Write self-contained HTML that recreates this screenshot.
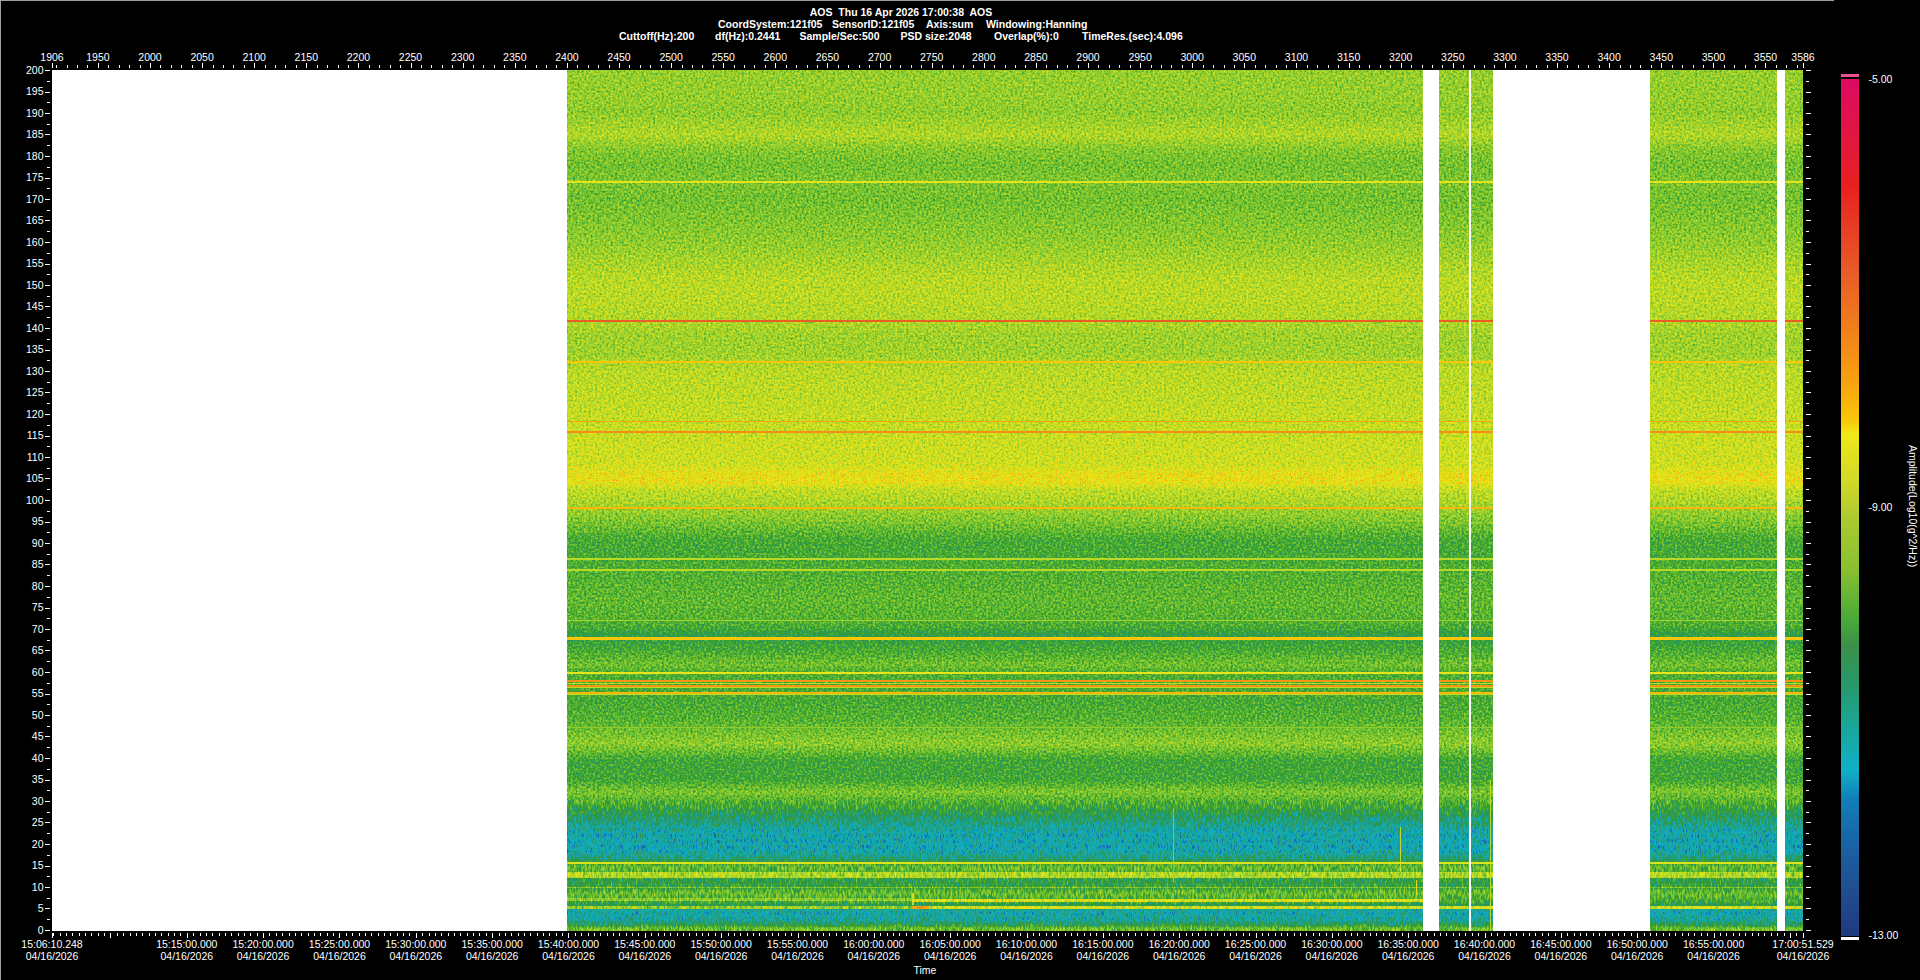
<!DOCTYPE html>
<html><head><meta charset="utf-8"><style>html,body{margin:0;padding:0;background:#000;width:1920px;height:980px;overflow:hidden}</style></head>
<body>
<svg width="1920" height="980" viewBox="0 0 1920 980" style="position:absolute;left:0;top:0" shape-rendering="crispEdges">
<rect x="0" y="0" width="1920" height="980" fill="#000"/>
<rect x="0" y="0" width="1834" height="1" fill="#a0a0a0"/>
<rect x="0" y="0" width="1" height="980" fill="#a0a0a0"/>
<rect x="52" y="70" width="1751" height="861" fill="#fff"/>
<defs><clipPath id="dc"><rect x="567" y="70" width="856" height="861"/><rect x="1439" y="70" width="30" height="861"/><rect x="1471" y="70" width="22" height="861"/><rect x="1650" y="70" width="127" height="861"/><rect x="1785" y="70" width="18" height="861"/></clipPath></defs>
<defs><linearGradient id="vp" gradientUnits="userSpaceOnUse" x1="0" y1="70" x2="0" y2="931"><stop offset="0.0000" stop-color="rgb(117,117,117)"/><stop offset="0.0348" stop-color="rgb(117,117,117)"/><stop offset="0.0488" stop-color="rgb(115,115,115)"/><stop offset="0.0755" stop-color="rgb(125,125,125)"/><stop offset="0.0929" stop-color="rgb(112,112,112)"/><stop offset="0.1103" stop-color="rgb(107,107,107)"/><stop offset="0.1289" stop-color="rgb(110,110,110)"/><stop offset="0.1510" stop-color="rgb(107,107,107)"/><stop offset="0.1974" stop-color="rgb(115,115,115)"/><stop offset="0.2439" stop-color="rgb(128,128,128)"/><stop offset="0.2671" stop-color="rgb(128,128,128)"/><stop offset="0.2927" stop-color="rgb(125,125,125)"/><stop offset="0.3078" stop-color="rgb(120,120,120)"/><stop offset="0.3310" stop-color="rgb(120,120,120)"/><stop offset="0.3484" stop-color="rgb(128,128,128)"/><stop offset="0.3833" stop-color="rgb(130,130,130)"/><stop offset="0.4204" stop-color="rgb(133,133,133)"/><stop offset="0.4588" stop-color="rgb(135,135,135)"/><stop offset="0.4692" stop-color="rgb(144,144,144)"/><stop offset="0.4785" stop-color="rgb(145,145,145)"/><stop offset="0.4878" stop-color="rgb(130,130,130)"/><stop offset="0.4994" stop-color="rgb(125,125,125)"/><stop offset="0.5087" stop-color="rgb(120,120,120)"/><stop offset="0.5250" stop-color="rgb(110,110,110)"/><stop offset="0.5459" stop-color="rgb(94,94,94)"/><stop offset="0.5668" stop-color="rgb(94,94,94)"/><stop offset="0.5807" stop-color="rgb(97,97,97)"/><stop offset="0.6156" stop-color="rgb(102,102,102)"/><stop offset="0.6365" stop-color="rgb(99,99,99)"/><stop offset="0.6481" stop-color="rgb(94,94,94)"/><stop offset="0.6551" stop-color="rgb(84,84,84)"/><stop offset="0.6643" stop-color="rgb(89,89,89)"/><stop offset="0.6736" stop-color="rgb(94,94,94)"/><stop offset="0.6911" stop-color="rgb(107,107,107)"/><stop offset="0.6992" stop-color="rgb(97,97,97)"/><stop offset="0.7317" stop-color="rgb(94,94,94)"/><stop offset="0.7549" stop-color="rgb(99,99,99)"/><stop offset="0.7828" stop-color="rgb(115,115,115)"/><stop offset="0.8014" stop-color="rgb(92,92,92)"/><stop offset="0.8246" stop-color="rgb(92,92,92)"/><stop offset="0.8386" stop-color="rgb(110,110,110)"/><stop offset="0.8548" stop-color="rgb(92,92,92)"/><stop offset="0.8688" stop-color="rgb(74,74,74)"/><stop offset="0.8850" stop-color="rgb(56,56,56)"/><stop offset="0.9059" stop-color="rgb(54,54,54)"/><stop offset="0.9152" stop-color="rgb(69,69,69)"/><stop offset="0.9245" stop-color="rgb(102,102,102)"/><stop offset="0.9292" stop-color="rgb(102,102,102)"/><stop offset="0.9408" stop-color="rgb(84,84,84)"/><stop offset="0.9489" stop-color="rgb(87,87,87)"/><stop offset="0.9559" stop-color="rgb(105,105,105)"/><stop offset="0.9663" stop-color="rgb(92,92,92)"/><stop offset="0.9779" stop-color="rgb(56,56,56)"/><stop offset="0.9872" stop-color="rgb(61,61,61)"/><stop offset="0.9930" stop-color="rgb(82,82,82)"/><stop offset="0.9965" stop-color="rgb(105,105,105)"/><stop offset="1.0000" stop-color="rgb(107,107,107)"/></linearGradient>
<filter id="sf" filterUnits="userSpaceOnUse" x="567" y="70" width="1236" height="730" color-interpolation-filters="sRGB"><feTurbulence type="fractalNoise" baseFrequency="0.45" numOctaves="2" seed="3" result="n"/><feColorMatrix in="n" type="matrix" values="1 0 0 0 0  1 0 0 0 0  1 0 0 0 0  0 0 0 0 1" result="ng0"/><feComponentTransfer in="ng0" result="ng"><feFuncR type="table" tableValues="0.000 0.000 0.010 0.047 0.083 0.120 0.156 0.192 0.227 0.262 0.297 0.332 0.366 0.400 0.434 0.467 0.500 0.532 0.564 0.596 0.627 0.658 0.688 0.717 0.746 0.774 0.801 0.827 0.853 0.877 0.899 0.920 0.935"/><feFuncG type="table" tableValues="0.000 0.000 0.010 0.047 0.083 0.120 0.156 0.192 0.227 0.262 0.297 0.332 0.366 0.400 0.434 0.467 0.500 0.532 0.564 0.596 0.627 0.658 0.688 0.717 0.746 0.774 0.801 0.827 0.853 0.877 0.899 0.920 0.935"/><feFuncB type="table" tableValues="0.000 0.000 0.010 0.047 0.083 0.120 0.156 0.192 0.227 0.262 0.297 0.332 0.366 0.400 0.434 0.467 0.500 0.532 0.564 0.596 0.627 0.658 0.688 0.717 0.746 0.774 0.801 0.827 0.853 0.877 0.899 0.920 0.935"/></feComponentTransfer><feComposite in="SourceGraphic" in2="ng" operator="arithmetic" k1="0" k2="1" k3="0.28" k4="-0.14" result="v"/><feComponentTransfer in="v"><feFuncR type="table" tableValues="0.125 0.125 0.125 0.125 0.118 0.110 0.103 0.095 0.085 0.073 0.063 0.063 0.063 0.075 0.086 0.099 0.116 0.132 0.149 0.163 0.174 0.186 0.217 0.253 0.311 0.369 0.428 0.485 0.539 0.593 0.648 0.700 0.752 0.803 0.842 0.877 0.912 0.946 0.973 0.973 0.973 0.971 0.963 0.955 0.948 0.940 0.932 0.924 0.917 0.910 0.910 0.910 0.910 0.910 0.910 0.910 0.904 0.898 0.893 0.887 0.881 0.875 0.869 0.863"/><feFuncG type="table" tableValues="0.227 0.251 0.275 0.299 0.325 0.351 0.377 0.404 0.437 0.471 0.511 0.602 0.690 0.678 0.667 0.654 0.637 0.620 0.604 0.596 0.596 0.596 0.625 0.660 0.689 0.718 0.747 0.773 0.791 0.810 0.828 0.844 0.859 0.875 0.885 0.894 0.902 0.889 0.771 0.719 0.667 0.620 0.586 0.552 0.518 0.484 0.451 0.417 0.383 0.349 0.312 0.276 0.239 0.202 0.166 0.129 0.116 0.105 0.094 0.083 0.072 0.061 0.050 0.039"/><feFuncB type="table" tableValues="0.502 0.523 0.544 0.566 0.588 0.610 0.633 0.655 0.678 0.701 0.725 0.755 0.782 0.725 0.667 0.610 0.552 0.493 0.435 0.371 0.302 0.233 0.205 0.188 0.188 0.188 0.188 0.187 0.183 0.178 0.173 0.160 0.145 0.129 0.119 0.110 0.102 0.084 0.034 0.044 0.055 0.065 0.077 0.089 0.100 0.112 0.123 0.135 0.147 0.156 0.151 0.146 0.141 0.136 0.131 0.126 0.156 0.190 0.223 0.257 0.291 0.325 0.358 0.392"/><feFuncA type="linear" slope="0" intercept="1"/></feComponentTransfer></filter><filter id="sf2" filterUnits="userSpaceOnUse" x="567" y="800" width="1236" height="131" color-interpolation-filters="sRGB"><feTurbulence type="fractalNoise" baseFrequency="0.55 0.18" numOctaves="2" seed="7" result="n"/><feColorMatrix in="n" type="matrix" values="1 0 0 0 0  1 0 0 0 0  1 0 0 0 0  0 0 0 0 1" result="ng0"/><feComponentTransfer in="ng0" result="ng"><feFuncR type="table" tableValues="0.000 0.000 0.010 0.047 0.083 0.120 0.156 0.192 0.227 0.262 0.297 0.332 0.366 0.400 0.434 0.467 0.500 0.532 0.564 0.596 0.627 0.658 0.688 0.717 0.746 0.774 0.801 0.827 0.853 0.877 0.899 0.920 0.935"/><feFuncG type="table" tableValues="0.000 0.000 0.010 0.047 0.083 0.120 0.156 0.192 0.227 0.262 0.297 0.332 0.366 0.400 0.434 0.467 0.500 0.532 0.564 0.596 0.627 0.658 0.688 0.717 0.746 0.774 0.801 0.827 0.853 0.877 0.899 0.920 0.935"/><feFuncB type="table" tableValues="0.000 0.000 0.010 0.047 0.083 0.120 0.156 0.192 0.227 0.262 0.297 0.332 0.366 0.400 0.434 0.467 0.500 0.532 0.564 0.596 0.627 0.658 0.688 0.717 0.746 0.774 0.801 0.827 0.853 0.877 0.899 0.920 0.935"/></feComponentTransfer><feComposite in="SourceGraphic" in2="ng" operator="arithmetic" k1="0" k2="1" k3="0.32" k4="-0.16" result="v"/><feComponentTransfer in="v"><feFuncR type="table" tableValues="0.125 0.125 0.125 0.125 0.118 0.110 0.103 0.095 0.085 0.073 0.063 0.063 0.063 0.075 0.086 0.099 0.116 0.132 0.149 0.163 0.174 0.186 0.217 0.253 0.311 0.369 0.428 0.485 0.539 0.593 0.648 0.700 0.752 0.803 0.842 0.877 0.912 0.946 0.973 0.973 0.973 0.971 0.963 0.955 0.948 0.940 0.932 0.924 0.917 0.910 0.910 0.910 0.910 0.910 0.910 0.910 0.904 0.898 0.893 0.887 0.881 0.875 0.869 0.863"/><feFuncG type="table" tableValues="0.227 0.251 0.275 0.299 0.325 0.351 0.377 0.404 0.437 0.471 0.511 0.602 0.690 0.678 0.667 0.654 0.637 0.620 0.604 0.596 0.596 0.596 0.625 0.660 0.689 0.718 0.747 0.773 0.791 0.810 0.828 0.844 0.859 0.875 0.885 0.894 0.902 0.889 0.771 0.719 0.667 0.620 0.586 0.552 0.518 0.484 0.451 0.417 0.383 0.349 0.312 0.276 0.239 0.202 0.166 0.129 0.116 0.105 0.094 0.083 0.072 0.061 0.050 0.039"/><feFuncB type="table" tableValues="0.502 0.523 0.544 0.566 0.588 0.610 0.633 0.655 0.678 0.701 0.725 0.755 0.782 0.725 0.667 0.610 0.552 0.493 0.435 0.371 0.302 0.233 0.205 0.188 0.188 0.188 0.188 0.187 0.183 0.178 0.173 0.160 0.145 0.129 0.119 0.110 0.102 0.084 0.034 0.044 0.055 0.065 0.077 0.089 0.100 0.112 0.123 0.135 0.147 0.156 0.151 0.146 0.141 0.136 0.131 0.126 0.156 0.190 0.223 0.257 0.291 0.325 0.358 0.392"/><feFuncA type="linear" slope="0" intercept="1"/></feComponentTransfer></filter></defs>
<g clip-path="url(#dc)">
<g filter="url(#sf)">
<rect x="567" y="70" width="1236" height="730" fill="url(#vp)"/>
</g>
<g filter="url(#sf2)">
<rect x="567" y="800" width="1236" height="131" fill="url(#vp)"/>
<rect x="567" y="872" width="1236" height="6" fill="rgb(125,125,125)"/>
<rect x="567" y="887" width="1236" height="1" fill="rgb(112,112,112)"/>
<rect x="567" y="906" width="345" height="3" fill="rgb(117,117,117)"/>
<rect x="912" y="906" width="891" height="3" fill="rgb(135,135,135)"/>
<rect x="567" y="898" width="345" height="3" fill="rgb(115,115,115)"/>
<rect x="912" y="899" width="511" height="3" fill="rgb(138,138,138)"/>
</g>
<rect x="567" y="181" width="1236" height="2" fill="rgb(226,229,27)"/>
<rect x="567" y="320" width="1236" height="2" fill="rgb(233,93,39)"/>
<rect x="567" y="361" width="1236" height="2" fill="rgb(248,199,8)"/>
<rect x="567" y="421" width="1236" height="1" fill="rgb(248,166,15)"/>
<rect x="567" y="431" width="1236" height="2" fill="rgb(244,142,22)"/>
<rect x="567" y="507" width="1236" height="2" fill="rgb(248,183,11)"/>
<rect x="567" y="558" width="1236" height="2" fill="rgb(185,217,39)"/>
<rect x="567" y="569" width="1236" height="2" fill="rgb(185,217,39)"/>
<rect x="567" y="620" width="1236" height="1" fill="rgb(160,209,45)"/>
<rect x="567" y="637" width="1236" height="3" fill="rgb(248,199,8)"/>
<rect x="567" y="672" width="1236" height="2" fill="rgb(232,230,26)"/>
<rect x="567" y="680" width="1236" height="2" fill="rgb(245,148,20)"/>
<rect x="567" y="685" width="1236" height="2" fill="rgb(245,148,20)"/>
<rect x="567" y="692" width="1236" height="2" fill="rgb(248,183,11)"/>
<rect x="567" y="683" width="1236" height="1" fill="rgb(185,217,39)"/>
<rect x="567" y="687" width="1236" height="1" fill="rgb(185,217,39)"/>
<rect x="567" y="694" width="1236" height="1" fill="rgb(185,217,39)"/>
<rect x="567" y="727" width="1236" height="1" fill="rgb(142,203,46)"/>
<rect x="567" y="862" width="1236" height="2" fill="rgb(221,227,29)"/>
<rect x="912" y="906" width="17" height="3" fill="rgb(246,153,18)" opacity="0.85"/>
<rect x="917" y="907" width="7" height="1" fill="rgb(236,110,33)" opacity="0.85"/>
<rect x="912" y="893" width="2" height="12" fill="rgb(226,229,27)" opacity="0.85"/>
<rect x="1173" y="808" width="1" height="75" fill="rgb(160,209,45)" opacity="0.85"/>
<rect x="1400" y="827" width="1" height="45" fill="rgb(221,227,29)" opacity="0.85"/>
<rect x="1490" y="780" width="1" height="150" fill="rgb(202,222,34)" opacity="0.85"/>
<rect x="1416" y="880" width="1" height="15" fill="rgb(237,231,25)" opacity="0.85"/>
</g>
<g fill="#fff">
<rect x="56" y="65" width="1" height="3"/>
<rect x="67" y="65" width="1" height="3"/>
<rect x="77" y="65" width="1" height="3"/>
<rect x="87" y="65" width="1" height="3"/>
<rect x="98" y="65" width="1" height="3"/>
<rect x="108" y="65" width="1" height="3"/>
<rect x="119" y="65" width="1" height="3"/>
<rect x="129" y="65" width="1" height="3"/>
<rect x="140" y="65" width="1" height="3"/>
<rect x="150" y="65" width="1" height="3"/>
<rect x="160" y="65" width="1" height="3"/>
<rect x="171" y="65" width="1" height="3"/>
<rect x="181" y="65" width="1" height="3"/>
<rect x="192" y="65" width="1" height="3"/>
<rect x="202" y="65" width="1" height="3"/>
<rect x="213" y="65" width="1" height="3"/>
<rect x="223" y="65" width="1" height="3"/>
<rect x="233" y="65" width="1" height="3"/>
<rect x="244" y="65" width="1" height="3"/>
<rect x="254" y="65" width="1" height="3"/>
<rect x="265" y="65" width="1" height="3"/>
<rect x="275" y="65" width="1" height="3"/>
<rect x="285" y="65" width="1" height="3"/>
<rect x="296" y="65" width="1" height="3"/>
<rect x="306" y="65" width="1" height="3"/>
<rect x="317" y="65" width="1" height="3"/>
<rect x="327" y="65" width="1" height="3"/>
<rect x="338" y="65" width="1" height="3"/>
<rect x="348" y="65" width="1" height="3"/>
<rect x="358" y="65" width="1" height="3"/>
<rect x="369" y="65" width="1" height="3"/>
<rect x="379" y="65" width="1" height="3"/>
<rect x="390" y="65" width="1" height="3"/>
<rect x="400" y="65" width="1" height="3"/>
<rect x="411" y="65" width="1" height="3"/>
<rect x="421" y="65" width="1" height="3"/>
<rect x="431" y="65" width="1" height="3"/>
<rect x="442" y="65" width="1" height="3"/>
<rect x="452" y="65" width="1" height="3"/>
<rect x="463" y="65" width="1" height="3"/>
<rect x="473" y="65" width="1" height="3"/>
<rect x="483" y="65" width="1" height="3"/>
<rect x="494" y="65" width="1" height="3"/>
<rect x="504" y="65" width="1" height="3"/>
<rect x="515" y="65" width="1" height="3"/>
<rect x="525" y="65" width="1" height="3"/>
<rect x="536" y="65" width="1" height="3"/>
<rect x="546" y="65" width="1" height="3"/>
<rect x="556" y="65" width="1" height="3"/>
<rect x="567" y="65" width="1" height="3"/>
<rect x="577" y="65" width="1" height="3"/>
<rect x="588" y="65" width="1" height="3"/>
<rect x="598" y="65" width="1" height="3"/>
<rect x="609" y="65" width="1" height="3"/>
<rect x="619" y="65" width="1" height="3"/>
<rect x="629" y="65" width="1" height="3"/>
<rect x="640" y="65" width="1" height="3"/>
<rect x="650" y="65" width="1" height="3"/>
<rect x="661" y="65" width="1" height="3"/>
<rect x="671" y="65" width="1" height="3"/>
<rect x="682" y="65" width="1" height="3"/>
<rect x="692" y="65" width="1" height="3"/>
<rect x="702" y="65" width="1" height="3"/>
<rect x="713" y="65" width="1" height="3"/>
<rect x="723" y="65" width="1" height="3"/>
<rect x="734" y="65" width="1" height="3"/>
<rect x="744" y="65" width="1" height="3"/>
<rect x="754" y="65" width="1" height="3"/>
<rect x="765" y="65" width="1" height="3"/>
<rect x="775" y="65" width="1" height="3"/>
<rect x="786" y="65" width="1" height="3"/>
<rect x="796" y="65" width="1" height="3"/>
<rect x="807" y="65" width="1" height="3"/>
<rect x="817" y="65" width="1" height="3"/>
<rect x="827" y="65" width="1" height="3"/>
<rect x="838" y="65" width="1" height="3"/>
<rect x="848" y="65" width="1" height="3"/>
<rect x="859" y="65" width="1" height="3"/>
<rect x="869" y="65" width="1" height="3"/>
<rect x="880" y="65" width="1" height="3"/>
<rect x="890" y="65" width="1" height="3"/>
<rect x="900" y="65" width="1" height="3"/>
<rect x="911" y="65" width="1" height="3"/>
<rect x="921" y="65" width="1" height="3"/>
<rect x="932" y="65" width="1" height="3"/>
<rect x="942" y="65" width="1" height="3"/>
<rect x="953" y="65" width="1" height="3"/>
<rect x="963" y="65" width="1" height="3"/>
<rect x="973" y="65" width="1" height="3"/>
<rect x="984" y="65" width="1" height="3"/>
<rect x="994" y="65" width="1" height="3"/>
<rect x="1005" y="65" width="1" height="3"/>
<rect x="1015" y="65" width="1" height="3"/>
<rect x="1025" y="65" width="1" height="3"/>
<rect x="1036" y="65" width="1" height="3"/>
<rect x="1046" y="65" width="1" height="3"/>
<rect x="1057" y="65" width="1" height="3"/>
<rect x="1067" y="65" width="1" height="3"/>
<rect x="1078" y="65" width="1" height="3"/>
<rect x="1088" y="65" width="1" height="3"/>
<rect x="1098" y="65" width="1" height="3"/>
<rect x="1109" y="65" width="1" height="3"/>
<rect x="1119" y="65" width="1" height="3"/>
<rect x="1130" y="65" width="1" height="3"/>
<rect x="1140" y="65" width="1" height="3"/>
<rect x="1151" y="65" width="1" height="3"/>
<rect x="1161" y="65" width="1" height="3"/>
<rect x="1171" y="65" width="1" height="3"/>
<rect x="1182" y="65" width="1" height="3"/>
<rect x="1192" y="65" width="1" height="3"/>
<rect x="1203" y="65" width="1" height="3"/>
<rect x="1213" y="65" width="1" height="3"/>
<rect x="1224" y="65" width="1" height="3"/>
<rect x="1234" y="65" width="1" height="3"/>
<rect x="1244" y="65" width="1" height="3"/>
<rect x="1255" y="65" width="1" height="3"/>
<rect x="1265" y="65" width="1" height="3"/>
<rect x="1276" y="65" width="1" height="3"/>
<rect x="1286" y="65" width="1" height="3"/>
<rect x="1296" y="65" width="1" height="3"/>
<rect x="1307" y="65" width="1" height="3"/>
<rect x="1317" y="65" width="1" height="3"/>
<rect x="1328" y="65" width="1" height="3"/>
<rect x="1338" y="65" width="1" height="3"/>
<rect x="1349" y="65" width="1" height="3"/>
<rect x="1359" y="65" width="1" height="3"/>
<rect x="1369" y="65" width="1" height="3"/>
<rect x="1380" y="65" width="1" height="3"/>
<rect x="1390" y="65" width="1" height="3"/>
<rect x="1401" y="65" width="1" height="3"/>
<rect x="1411" y="65" width="1" height="3"/>
<rect x="1422" y="65" width="1" height="3"/>
<rect x="1432" y="65" width="1" height="3"/>
<rect x="1442" y="65" width="1" height="3"/>
<rect x="1453" y="65" width="1" height="3"/>
<rect x="1463" y="65" width="1" height="3"/>
<rect x="1474" y="65" width="1" height="3"/>
<rect x="1484" y="65" width="1" height="3"/>
<rect x="1494" y="65" width="1" height="3"/>
<rect x="1505" y="65" width="1" height="3"/>
<rect x="1515" y="65" width="1" height="3"/>
<rect x="1526" y="65" width="1" height="3"/>
<rect x="1536" y="65" width="1" height="3"/>
<rect x="1547" y="65" width="1" height="3"/>
<rect x="1557" y="65" width="1" height="3"/>
<rect x="1567" y="65" width="1" height="3"/>
<rect x="1578" y="65" width="1" height="3"/>
<rect x="1588" y="65" width="1" height="3"/>
<rect x="1599" y="65" width="1" height="3"/>
<rect x="1609" y="65" width="1" height="3"/>
<rect x="1620" y="65" width="1" height="3"/>
<rect x="1630" y="65" width="1" height="3"/>
<rect x="1640" y="65" width="1" height="3"/>
<rect x="1651" y="65" width="1" height="3"/>
<rect x="1661" y="65" width="1" height="3"/>
<rect x="1672" y="65" width="1" height="3"/>
<rect x="1682" y="65" width="1" height="3"/>
<rect x="1693" y="65" width="1" height="3"/>
<rect x="1703" y="65" width="1" height="3"/>
<rect x="1713" y="65" width="1" height="3"/>
<rect x="1724" y="65" width="1" height="3"/>
<rect x="1734" y="65" width="1" height="3"/>
<rect x="1745" y="65" width="1" height="3"/>
<rect x="1755" y="65" width="1" height="3"/>
<rect x="1765" y="65" width="1" height="3"/>
<rect x="1776" y="65" width="1" height="3"/>
<rect x="1786" y="65" width="1" height="3"/>
<rect x="1797" y="65" width="1" height="3"/>
<rect x="52" y="63" width="1" height="5"/>
<rect x="98" y="63" width="1" height="5"/>
<rect x="150" y="63" width="1" height="5"/>
<rect x="202" y="63" width="1" height="5"/>
<rect x="254" y="63" width="1" height="5"/>
<rect x="306" y="63" width="1" height="5"/>
<rect x="358" y="63" width="1" height="5"/>
<rect x="411" y="63" width="1" height="5"/>
<rect x="463" y="63" width="1" height="5"/>
<rect x="515" y="63" width="1" height="5"/>
<rect x="567" y="63" width="1" height="5"/>
<rect x="619" y="63" width="1" height="5"/>
<rect x="671" y="63" width="1" height="5"/>
<rect x="723" y="63" width="1" height="5"/>
<rect x="775" y="63" width="1" height="5"/>
<rect x="827" y="63" width="1" height="5"/>
<rect x="880" y="63" width="1" height="5"/>
<rect x="932" y="63" width="1" height="5"/>
<rect x="984" y="63" width="1" height="5"/>
<rect x="1036" y="63" width="1" height="5"/>
<rect x="1088" y="63" width="1" height="5"/>
<rect x="1140" y="63" width="1" height="5"/>
<rect x="1192" y="63" width="1" height="5"/>
<rect x="1244" y="63" width="1" height="5"/>
<rect x="1296" y="63" width="1" height="5"/>
<rect x="1349" y="63" width="1" height="5"/>
<rect x="1401" y="63" width="1" height="5"/>
<rect x="1453" y="63" width="1" height="5"/>
<rect x="1505" y="63" width="1" height="5"/>
<rect x="1557" y="63" width="1" height="5"/>
<rect x="1609" y="63" width="1" height="5"/>
<rect x="1661" y="63" width="1" height="5"/>
<rect x="1713" y="63" width="1" height="5"/>
<rect x="1765" y="63" width="1" height="5"/>
<rect x="1803" y="63" width="1" height="5"/>
</g>
<g fill="#fff" font-family="Liberation Sans, sans-serif" font-size="10.5" text-anchor="middle">
<text x="52.0" y="61">1906</text>
<text x="97.9" y="61">1950</text>
<text x="150.0" y="61">2000</text>
<text x="202.1" y="61">2050</text>
<text x="254.2" y="61">2100</text>
<text x="306.3" y="61">2150</text>
<text x="358.4" y="61">2200</text>
<text x="410.5" y="61">2250</text>
<text x="462.7" y="61">2300</text>
<text x="514.8" y="61">2350</text>
<text x="566.9" y="61">2400</text>
<text x="619.0" y="61">2450</text>
<text x="671.1" y="61">2500</text>
<text x="723.2" y="61">2550</text>
<text x="775.3" y="61">2600</text>
<text x="827.4" y="61">2650</text>
<text x="879.6" y="61">2700</text>
<text x="931.7" y="61">2750</text>
<text x="983.8" y="61">2800</text>
<text x="1035.9" y="61">2850</text>
<text x="1088.0" y="61">2900</text>
<text x="1140.1" y="61">2950</text>
<text x="1192.2" y="61">3000</text>
<text x="1244.3" y="61">3050</text>
<text x="1296.5" y="61">3100</text>
<text x="1348.6" y="61">3150</text>
<text x="1400.7" y="61">3200</text>
<text x="1452.8" y="61">3250</text>
<text x="1504.9" y="61">3300</text>
<text x="1557.0" y="61">3350</text>
<text x="1609.1" y="61">3400</text>
<text x="1661.3" y="61">3450</text>
<text x="1713.4" y="61">3500</text>
<text x="1765.5" y="61">3550</text>
<text x="1803.0" y="61">3586</text>
</g>
<g fill="#fff">
<rect x="45" y="930" width="5" height="1"/>
<rect x="47" y="919" width="3" height="1"/>
<rect x="45" y="908" width="5" height="1"/>
<rect x="47" y="898" width="3" height="1"/>
<rect x="45" y="887" width="5" height="1"/>
<rect x="47" y="876" width="3" height="1"/>
<rect x="45" y="866" width="5" height="1"/>
<rect x="47" y="855" width="3" height="1"/>
<rect x="45" y="844" width="5" height="1"/>
<rect x="47" y="833" width="3" height="1"/>
<rect x="45" y="822" width="5" height="1"/>
<rect x="47" y="812" width="3" height="1"/>
<rect x="45" y="801" width="5" height="1"/>
<rect x="47" y="790" width="3" height="1"/>
<rect x="45" y="780" width="5" height="1"/>
<rect x="47" y="769" width="3" height="1"/>
<rect x="45" y="758" width="5" height="1"/>
<rect x="47" y="747" width="3" height="1"/>
<rect x="45" y="736" width="5" height="1"/>
<rect x="47" y="726" width="3" height="1"/>
<rect x="45" y="715" width="5" height="1"/>
<rect x="47" y="704" width="3" height="1"/>
<rect x="45" y="694" width="5" height="1"/>
<rect x="47" y="683" width="3" height="1"/>
<rect x="45" y="672" width="5" height="1"/>
<rect x="47" y="661" width="3" height="1"/>
<rect x="45" y="650" width="5" height="1"/>
<rect x="47" y="640" width="3" height="1"/>
<rect x="45" y="629" width="5" height="1"/>
<rect x="47" y="618" width="3" height="1"/>
<rect x="45" y="608" width="5" height="1"/>
<rect x="47" y="597" width="3" height="1"/>
<rect x="45" y="586" width="5" height="1"/>
<rect x="47" y="575" width="3" height="1"/>
<rect x="45" y="564" width="5" height="1"/>
<rect x="47" y="554" width="3" height="1"/>
<rect x="45" y="543" width="5" height="1"/>
<rect x="47" y="532" width="3" height="1"/>
<rect x="45" y="522" width="5" height="1"/>
<rect x="47" y="511" width="3" height="1"/>
<rect x="45" y="500" width="5" height="1"/>
<rect x="47" y="489" width="3" height="1"/>
<rect x="45" y="478" width="5" height="1"/>
<rect x="47" y="468" width="3" height="1"/>
<rect x="45" y="457" width="5" height="1"/>
<rect x="47" y="446" width="3" height="1"/>
<rect x="45" y="436" width="5" height="1"/>
<rect x="47" y="425" width="3" height="1"/>
<rect x="45" y="414" width="5" height="1"/>
<rect x="47" y="403" width="3" height="1"/>
<rect x="45" y="392" width="5" height="1"/>
<rect x="47" y="382" width="3" height="1"/>
<rect x="45" y="371" width="5" height="1"/>
<rect x="47" y="360" width="3" height="1"/>
<rect x="45" y="350" width="5" height="1"/>
<rect x="47" y="339" width="3" height="1"/>
<rect x="45" y="328" width="5" height="1"/>
<rect x="47" y="317" width="3" height="1"/>
<rect x="45" y="306" width="5" height="1"/>
<rect x="47" y="296" width="3" height="1"/>
<rect x="45" y="285" width="5" height="1"/>
<rect x="47" y="274" width="3" height="1"/>
<rect x="45" y="264" width="5" height="1"/>
<rect x="47" y="253" width="3" height="1"/>
<rect x="45" y="242" width="5" height="1"/>
<rect x="47" y="231" width="3" height="1"/>
<rect x="45" y="220" width="5" height="1"/>
<rect x="47" y="210" width="3" height="1"/>
<rect x="45" y="199" width="5" height="1"/>
<rect x="47" y="188" width="3" height="1"/>
<rect x="45" y="178" width="5" height="1"/>
<rect x="47" y="167" width="3" height="1"/>
<rect x="45" y="156" width="5" height="1"/>
<rect x="47" y="145" width="3" height="1"/>
<rect x="45" y="134" width="5" height="1"/>
<rect x="47" y="124" width="3" height="1"/>
<rect x="45" y="113" width="5" height="1"/>
<rect x="47" y="102" width="3" height="1"/>
<rect x="45" y="92" width="5" height="1"/>
<rect x="47" y="81" width="3" height="1"/>
<rect x="45" y="70" width="5" height="1"/>
<rect x="1806" y="930" width="5" height="1"/>
<rect x="1806" y="919" width="3" height="1"/>
<rect x="1806" y="908" width="5" height="1"/>
<rect x="1806" y="898" width="3" height="1"/>
<rect x="1806" y="887" width="5" height="1"/>
<rect x="1806" y="876" width="3" height="1"/>
<rect x="1806" y="866" width="5" height="1"/>
<rect x="1806" y="855" width="3" height="1"/>
<rect x="1806" y="844" width="5" height="1"/>
<rect x="1806" y="833" width="3" height="1"/>
<rect x="1806" y="822" width="5" height="1"/>
<rect x="1806" y="812" width="3" height="1"/>
<rect x="1806" y="801" width="5" height="1"/>
<rect x="1806" y="790" width="3" height="1"/>
<rect x="1806" y="780" width="5" height="1"/>
<rect x="1806" y="769" width="3" height="1"/>
<rect x="1806" y="758" width="5" height="1"/>
<rect x="1806" y="747" width="3" height="1"/>
<rect x="1806" y="736" width="5" height="1"/>
<rect x="1806" y="726" width="3" height="1"/>
<rect x="1806" y="715" width="5" height="1"/>
<rect x="1806" y="704" width="3" height="1"/>
<rect x="1806" y="694" width="5" height="1"/>
<rect x="1806" y="683" width="3" height="1"/>
<rect x="1806" y="672" width="5" height="1"/>
<rect x="1806" y="661" width="3" height="1"/>
<rect x="1806" y="650" width="5" height="1"/>
<rect x="1806" y="640" width="3" height="1"/>
<rect x="1806" y="629" width="5" height="1"/>
<rect x="1806" y="618" width="3" height="1"/>
<rect x="1806" y="608" width="5" height="1"/>
<rect x="1806" y="597" width="3" height="1"/>
<rect x="1806" y="586" width="5" height="1"/>
<rect x="1806" y="575" width="3" height="1"/>
<rect x="1806" y="564" width="5" height="1"/>
<rect x="1806" y="554" width="3" height="1"/>
<rect x="1806" y="543" width="5" height="1"/>
<rect x="1806" y="532" width="3" height="1"/>
<rect x="1806" y="522" width="5" height="1"/>
<rect x="1806" y="511" width="3" height="1"/>
<rect x="1806" y="500" width="5" height="1"/>
<rect x="1806" y="489" width="3" height="1"/>
<rect x="1806" y="478" width="5" height="1"/>
<rect x="1806" y="468" width="3" height="1"/>
<rect x="1806" y="457" width="5" height="1"/>
<rect x="1806" y="446" width="3" height="1"/>
<rect x="1806" y="436" width="5" height="1"/>
<rect x="1806" y="425" width="3" height="1"/>
<rect x="1806" y="414" width="5" height="1"/>
<rect x="1806" y="403" width="3" height="1"/>
<rect x="1806" y="392" width="5" height="1"/>
<rect x="1806" y="382" width="3" height="1"/>
<rect x="1806" y="371" width="5" height="1"/>
<rect x="1806" y="360" width="3" height="1"/>
<rect x="1806" y="350" width="5" height="1"/>
<rect x="1806" y="339" width="3" height="1"/>
<rect x="1806" y="328" width="5" height="1"/>
<rect x="1806" y="317" width="3" height="1"/>
<rect x="1806" y="306" width="5" height="1"/>
<rect x="1806" y="296" width="3" height="1"/>
<rect x="1806" y="285" width="5" height="1"/>
<rect x="1806" y="274" width="3" height="1"/>
<rect x="1806" y="264" width="5" height="1"/>
<rect x="1806" y="253" width="3" height="1"/>
<rect x="1806" y="242" width="5" height="1"/>
<rect x="1806" y="231" width="3" height="1"/>
<rect x="1806" y="220" width="5" height="1"/>
<rect x="1806" y="210" width="3" height="1"/>
<rect x="1806" y="199" width="5" height="1"/>
<rect x="1806" y="188" width="3" height="1"/>
<rect x="1806" y="178" width="5" height="1"/>
<rect x="1806" y="167" width="3" height="1"/>
<rect x="1806" y="156" width="5" height="1"/>
<rect x="1806" y="145" width="3" height="1"/>
<rect x="1806" y="134" width="5" height="1"/>
<rect x="1806" y="124" width="3" height="1"/>
<rect x="1806" y="113" width="5" height="1"/>
<rect x="1806" y="102" width="3" height="1"/>
<rect x="1806" y="92" width="5" height="1"/>
<rect x="1806" y="81" width="3" height="1"/>
<rect x="1806" y="70" width="5" height="1"/>
</g>
<g fill="#fff" font-family="Liberation Sans, sans-serif" font-size="10.5" text-anchor="end">
<text x="43.5" y="933.8">0</text>
<text x="43.5" y="912.3">5</text>
<text x="43.5" y="890.8">10</text>
<text x="43.5" y="869.3">15</text>
<text x="43.5" y="847.8">20</text>
<text x="43.5" y="826.3">25</text>
<text x="43.5" y="804.8">30</text>
<text x="43.5" y="783.3">35</text>
<text x="43.5" y="761.8">40</text>
<text x="43.5" y="740.3">45</text>
<text x="43.5" y="718.8">50</text>
<text x="43.5" y="697.3">55</text>
<text x="43.5" y="675.8">60</text>
<text x="43.5" y="654.3">65</text>
<text x="43.5" y="632.8">70</text>
<text x="43.5" y="611.3">75</text>
<text x="43.5" y="589.8">80</text>
<text x="43.5" y="568.3">85</text>
<text x="43.5" y="546.8">90</text>
<text x="43.5" y="525.3">95</text>
<text x="43.5" y="503.8">100</text>
<text x="43.5" y="482.3">105</text>
<text x="43.5" y="460.8">110</text>
<text x="43.5" y="439.3">115</text>
<text x="43.5" y="417.8">120</text>
<text x="43.5" y="396.3">125</text>
<text x="43.5" y="374.8">130</text>
<text x="43.5" y="353.3">135</text>
<text x="43.5" y="331.8">140</text>
<text x="43.5" y="310.3">145</text>
<text x="43.5" y="288.8">150</text>
<text x="43.5" y="267.3">155</text>
<text x="43.5" y="245.8">160</text>
<text x="43.5" y="224.3">165</text>
<text x="43.5" y="202.8">170</text>
<text x="43.5" y="181.3">175</text>
<text x="43.5" y="159.8">180</text>
<text x="43.5" y="138.3">185</text>
<text x="43.5" y="116.8">190</text>
<text x="43.5" y="95.3">195</text>
<text x="43.5" y="73.8">200</text>
</g>
<g fill="#fff">
<rect x="53" y="933" width="1" height="3"/>
<rect x="60" y="933" width="1" height="3"/>
<rect x="66" y="933" width="1" height="3"/>
<rect x="72" y="933" width="1" height="3"/>
<rect x="79" y="933" width="1" height="3"/>
<rect x="85" y="933" width="1" height="3"/>
<rect x="91" y="933" width="1" height="3"/>
<rect x="98" y="933" width="1" height="3"/>
<rect x="104" y="933" width="1" height="3"/>
<rect x="110" y="933" width="1" height="3"/>
<rect x="117" y="933" width="1" height="3"/>
<rect x="123" y="933" width="1" height="3"/>
<rect x="130" y="933" width="1" height="3"/>
<rect x="136" y="933" width="1" height="3"/>
<rect x="142" y="933" width="1" height="3"/>
<rect x="149" y="933" width="1" height="3"/>
<rect x="155" y="933" width="1" height="3"/>
<rect x="161" y="933" width="1" height="3"/>
<rect x="168" y="933" width="1" height="3"/>
<rect x="174" y="933" width="1" height="3"/>
<rect x="180" y="933" width="1" height="3"/>
<rect x="187" y="933" width="1" height="3"/>
<rect x="193" y="933" width="1" height="3"/>
<rect x="200" y="933" width="1" height="3"/>
<rect x="206" y="933" width="1" height="3"/>
<rect x="212" y="933" width="1" height="3"/>
<rect x="219" y="933" width="1" height="3"/>
<rect x="225" y="933" width="1" height="3"/>
<rect x="231" y="933" width="1" height="3"/>
<rect x="238" y="933" width="1" height="3"/>
<rect x="244" y="933" width="1" height="3"/>
<rect x="250" y="933" width="1" height="3"/>
<rect x="257" y="933" width="1" height="3"/>
<rect x="263" y="933" width="1" height="3"/>
<rect x="269" y="933" width="1" height="3"/>
<rect x="276" y="933" width="1" height="3"/>
<rect x="282" y="933" width="1" height="3"/>
<rect x="289" y="933" width="1" height="3"/>
<rect x="295" y="933" width="1" height="3"/>
<rect x="301" y="933" width="1" height="3"/>
<rect x="308" y="933" width="1" height="3"/>
<rect x="314" y="933" width="1" height="3"/>
<rect x="320" y="933" width="1" height="3"/>
<rect x="327" y="933" width="1" height="3"/>
<rect x="333" y="933" width="1" height="3"/>
<rect x="339" y="933" width="1" height="3"/>
<rect x="346" y="933" width="1" height="3"/>
<rect x="352" y="933" width="1" height="3"/>
<rect x="359" y="933" width="1" height="3"/>
<rect x="365" y="933" width="1" height="3"/>
<rect x="371" y="933" width="1" height="3"/>
<rect x="378" y="933" width="1" height="3"/>
<rect x="384" y="933" width="1" height="3"/>
<rect x="390" y="933" width="1" height="3"/>
<rect x="397" y="933" width="1" height="3"/>
<rect x="403" y="933" width="1" height="3"/>
<rect x="409" y="933" width="1" height="3"/>
<rect x="416" y="933" width="1" height="3"/>
<rect x="422" y="933" width="1" height="3"/>
<rect x="429" y="933" width="1" height="3"/>
<rect x="435" y="933" width="1" height="3"/>
<rect x="441" y="933" width="1" height="3"/>
<rect x="448" y="933" width="1" height="3"/>
<rect x="454" y="933" width="1" height="3"/>
<rect x="460" y="933" width="1" height="3"/>
<rect x="467" y="933" width="1" height="3"/>
<rect x="473" y="933" width="1" height="3"/>
<rect x="479" y="933" width="1" height="3"/>
<rect x="486" y="933" width="1" height="3"/>
<rect x="492" y="933" width="1" height="3"/>
<rect x="499" y="933" width="1" height="3"/>
<rect x="505" y="933" width="1" height="3"/>
<rect x="511" y="933" width="1" height="3"/>
<rect x="518" y="933" width="1" height="3"/>
<rect x="524" y="933" width="1" height="3"/>
<rect x="530" y="933" width="1" height="3"/>
<rect x="537" y="933" width="1" height="3"/>
<rect x="543" y="933" width="1" height="3"/>
<rect x="549" y="933" width="1" height="3"/>
<rect x="556" y="933" width="1" height="3"/>
<rect x="562" y="933" width="1" height="3"/>
<rect x="568" y="933" width="1" height="3"/>
<rect x="575" y="933" width="1" height="3"/>
<rect x="581" y="933" width="1" height="3"/>
<rect x="588" y="933" width="1" height="3"/>
<rect x="594" y="933" width="1" height="3"/>
<rect x="600" y="933" width="1" height="3"/>
<rect x="607" y="933" width="1" height="3"/>
<rect x="613" y="933" width="1" height="3"/>
<rect x="619" y="933" width="1" height="3"/>
<rect x="626" y="933" width="1" height="3"/>
<rect x="632" y="933" width="1" height="3"/>
<rect x="638" y="933" width="1" height="3"/>
<rect x="645" y="933" width="1" height="3"/>
<rect x="651" y="933" width="1" height="3"/>
<rect x="658" y="933" width="1" height="3"/>
<rect x="664" y="933" width="1" height="3"/>
<rect x="670" y="933" width="1" height="3"/>
<rect x="677" y="933" width="1" height="3"/>
<rect x="683" y="933" width="1" height="3"/>
<rect x="689" y="933" width="1" height="3"/>
<rect x="696" y="933" width="1" height="3"/>
<rect x="702" y="933" width="1" height="3"/>
<rect x="708" y="933" width="1" height="3"/>
<rect x="715" y="933" width="1" height="3"/>
<rect x="721" y="933" width="1" height="3"/>
<rect x="728" y="933" width="1" height="3"/>
<rect x="734" y="933" width="1" height="3"/>
<rect x="740" y="933" width="1" height="3"/>
<rect x="747" y="933" width="1" height="3"/>
<rect x="753" y="933" width="1" height="3"/>
<rect x="759" y="933" width="1" height="3"/>
<rect x="766" y="933" width="1" height="3"/>
<rect x="772" y="933" width="1" height="3"/>
<rect x="778" y="933" width="1" height="3"/>
<rect x="785" y="933" width="1" height="3"/>
<rect x="791" y="933" width="1" height="3"/>
<rect x="798" y="933" width="1" height="3"/>
<rect x="804" y="933" width="1" height="3"/>
<rect x="810" y="933" width="1" height="3"/>
<rect x="817" y="933" width="1" height="3"/>
<rect x="823" y="933" width="1" height="3"/>
<rect x="829" y="933" width="1" height="3"/>
<rect x="836" y="933" width="1" height="3"/>
<rect x="842" y="933" width="1" height="3"/>
<rect x="848" y="933" width="1" height="3"/>
<rect x="855" y="933" width="1" height="3"/>
<rect x="861" y="933" width="1" height="3"/>
<rect x="867" y="933" width="1" height="3"/>
<rect x="874" y="933" width="1" height="3"/>
<rect x="880" y="933" width="1" height="3"/>
<rect x="887" y="933" width="1" height="3"/>
<rect x="893" y="933" width="1" height="3"/>
<rect x="899" y="933" width="1" height="3"/>
<rect x="906" y="933" width="1" height="3"/>
<rect x="912" y="933" width="1" height="3"/>
<rect x="918" y="933" width="1" height="3"/>
<rect x="925" y="933" width="1" height="3"/>
<rect x="931" y="933" width="1" height="3"/>
<rect x="937" y="933" width="1" height="3"/>
<rect x="944" y="933" width="1" height="3"/>
<rect x="950" y="933" width="1" height="3"/>
<rect x="957" y="933" width="1" height="3"/>
<rect x="963" y="933" width="1" height="3"/>
<rect x="969" y="933" width="1" height="3"/>
<rect x="976" y="933" width="1" height="3"/>
<rect x="982" y="933" width="1" height="3"/>
<rect x="988" y="933" width="1" height="3"/>
<rect x="995" y="933" width="1" height="3"/>
<rect x="1001" y="933" width="1" height="3"/>
<rect x="1007" y="933" width="1" height="3"/>
<rect x="1014" y="933" width="1" height="3"/>
<rect x="1020" y="933" width="1" height="3"/>
<rect x="1027" y="933" width="1" height="3"/>
<rect x="1033" y="933" width="1" height="3"/>
<rect x="1039" y="933" width="1" height="3"/>
<rect x="1046" y="933" width="1" height="3"/>
<rect x="1052" y="933" width="1" height="3"/>
<rect x="1058" y="933" width="1" height="3"/>
<rect x="1065" y="933" width="1" height="3"/>
<rect x="1071" y="933" width="1" height="3"/>
<rect x="1077" y="933" width="1" height="3"/>
<rect x="1084" y="933" width="1" height="3"/>
<rect x="1090" y="933" width="1" height="3"/>
<rect x="1096" y="933" width="1" height="3"/>
<rect x="1103" y="933" width="1" height="3"/>
<rect x="1109" y="933" width="1" height="3"/>
<rect x="1116" y="933" width="1" height="3"/>
<rect x="1122" y="933" width="1" height="3"/>
<rect x="1128" y="933" width="1" height="3"/>
<rect x="1135" y="933" width="1" height="3"/>
<rect x="1141" y="933" width="1" height="3"/>
<rect x="1147" y="933" width="1" height="3"/>
<rect x="1154" y="933" width="1" height="3"/>
<rect x="1160" y="933" width="1" height="3"/>
<rect x="1166" y="933" width="1" height="3"/>
<rect x="1173" y="933" width="1" height="3"/>
<rect x="1179" y="933" width="1" height="3"/>
<rect x="1186" y="933" width="1" height="3"/>
<rect x="1192" y="933" width="1" height="3"/>
<rect x="1198" y="933" width="1" height="3"/>
<rect x="1205" y="933" width="1" height="3"/>
<rect x="1211" y="933" width="1" height="3"/>
<rect x="1217" y="933" width="1" height="3"/>
<rect x="1224" y="933" width="1" height="3"/>
<rect x="1230" y="933" width="1" height="3"/>
<rect x="1236" y="933" width="1" height="3"/>
<rect x="1243" y="933" width="1" height="3"/>
<rect x="1249" y="933" width="1" height="3"/>
<rect x="1256" y="933" width="1" height="3"/>
<rect x="1262" y="933" width="1" height="3"/>
<rect x="1268" y="933" width="1" height="3"/>
<rect x="1275" y="933" width="1" height="3"/>
<rect x="1281" y="933" width="1" height="3"/>
<rect x="1287" y="933" width="1" height="3"/>
<rect x="1294" y="933" width="1" height="3"/>
<rect x="1300" y="933" width="1" height="3"/>
<rect x="1306" y="933" width="1" height="3"/>
<rect x="1313" y="933" width="1" height="3"/>
<rect x="1319" y="933" width="1" height="3"/>
<rect x="1326" y="933" width="1" height="3"/>
<rect x="1332" y="933" width="1" height="3"/>
<rect x="1338" y="933" width="1" height="3"/>
<rect x="1345" y="933" width="1" height="3"/>
<rect x="1351" y="933" width="1" height="3"/>
<rect x="1357" y="933" width="1" height="3"/>
<rect x="1364" y="933" width="1" height="3"/>
<rect x="1370" y="933" width="1" height="3"/>
<rect x="1376" y="933" width="1" height="3"/>
<rect x="1383" y="933" width="1" height="3"/>
<rect x="1389" y="933" width="1" height="3"/>
<rect x="1395" y="933" width="1" height="3"/>
<rect x="1402" y="933" width="1" height="3"/>
<rect x="1408" y="933" width="1" height="3"/>
<rect x="1415" y="933" width="1" height="3"/>
<rect x="1421" y="933" width="1" height="3"/>
<rect x="1427" y="933" width="1" height="3"/>
<rect x="1434" y="933" width="1" height="3"/>
<rect x="1440" y="933" width="1" height="3"/>
<rect x="1446" y="933" width="1" height="3"/>
<rect x="1453" y="933" width="1" height="3"/>
<rect x="1459" y="933" width="1" height="3"/>
<rect x="1465" y="933" width="1" height="3"/>
<rect x="1472" y="933" width="1" height="3"/>
<rect x="1478" y="933" width="1" height="3"/>
<rect x="1485" y="933" width="1" height="3"/>
<rect x="1491" y="933" width="1" height="3"/>
<rect x="1497" y="933" width="1" height="3"/>
<rect x="1504" y="933" width="1" height="3"/>
<rect x="1510" y="933" width="1" height="3"/>
<rect x="1516" y="933" width="1" height="3"/>
<rect x="1523" y="933" width="1" height="3"/>
<rect x="1529" y="933" width="1" height="3"/>
<rect x="1535" y="933" width="1" height="3"/>
<rect x="1542" y="933" width="1" height="3"/>
<rect x="1548" y="933" width="1" height="3"/>
<rect x="1555" y="933" width="1" height="3"/>
<rect x="1561" y="933" width="1" height="3"/>
<rect x="1567" y="933" width="1" height="3"/>
<rect x="1574" y="933" width="1" height="3"/>
<rect x="1580" y="933" width="1" height="3"/>
<rect x="1586" y="933" width="1" height="3"/>
<rect x="1593" y="933" width="1" height="3"/>
<rect x="1599" y="933" width="1" height="3"/>
<rect x="1605" y="933" width="1" height="3"/>
<rect x="1612" y="933" width="1" height="3"/>
<rect x="1618" y="933" width="1" height="3"/>
<rect x="1624" y="933" width="1" height="3"/>
<rect x="1631" y="933" width="1" height="3"/>
<rect x="1637" y="933" width="1" height="3"/>
<rect x="1644" y="933" width="1" height="3"/>
<rect x="1650" y="933" width="1" height="3"/>
<rect x="1656" y="933" width="1" height="3"/>
<rect x="1663" y="933" width="1" height="3"/>
<rect x="1669" y="933" width="1" height="3"/>
<rect x="1675" y="933" width="1" height="3"/>
<rect x="1682" y="933" width="1" height="3"/>
<rect x="1688" y="933" width="1" height="3"/>
<rect x="1694" y="933" width="1" height="3"/>
<rect x="1701" y="933" width="1" height="3"/>
<rect x="1707" y="933" width="1" height="3"/>
<rect x="1714" y="933" width="1" height="3"/>
<rect x="1720" y="933" width="1" height="3"/>
<rect x="1726" y="933" width="1" height="3"/>
<rect x="1733" y="933" width="1" height="3"/>
<rect x="1739" y="933" width="1" height="3"/>
<rect x="1745" y="933" width="1" height="3"/>
<rect x="1752" y="933" width="1" height="3"/>
<rect x="1758" y="933" width="1" height="3"/>
<rect x="1764" y="933" width="1" height="3"/>
<rect x="1771" y="933" width="1" height="3"/>
<rect x="1777" y="933" width="1" height="3"/>
<rect x="1784" y="933" width="1" height="3"/>
<rect x="1790" y="933" width="1" height="3"/>
<rect x="1796" y="933" width="1" height="3"/>
<rect x="1803" y="933" width="1" height="3"/>
<rect x="110" y="933" width="1" height="5"/>
<rect x="187" y="933" width="1" height="5"/>
<rect x="263" y="933" width="1" height="5"/>
<rect x="339" y="933" width="1" height="5"/>
<rect x="416" y="933" width="1" height="5"/>
<rect x="492" y="933" width="1" height="5"/>
<rect x="568" y="933" width="1" height="5"/>
<rect x="645" y="933" width="1" height="5"/>
<rect x="721" y="933" width="1" height="5"/>
<rect x="798" y="933" width="1" height="5"/>
<rect x="874" y="933" width="1" height="5"/>
<rect x="950" y="933" width="1" height="5"/>
<rect x="1027" y="933" width="1" height="5"/>
<rect x="1103" y="933" width="1" height="5"/>
<rect x="1179" y="933" width="1" height="5"/>
<rect x="1256" y="933" width="1" height="5"/>
<rect x="1332" y="933" width="1" height="5"/>
<rect x="1408" y="933" width="1" height="5"/>
<rect x="1485" y="933" width="1" height="5"/>
<rect x="1561" y="933" width="1" height="5"/>
<rect x="1637" y="933" width="1" height="5"/>
<rect x="1714" y="933" width="1" height="5"/>
<rect x="1790" y="933" width="1" height="5"/>
<rect x="52" y="933" width="1" height="5"/>
<rect x="1803" y="933" width="1" height="5"/>
</g>
<g fill="#fff" font-family="Liberation Sans, sans-serif" font-size="10.5" text-anchor="middle">
<text x="52.0" y="948">15:06:10.248</text><text x="52.0" y="960">04/16/2026</text>
<text x="186.8" y="948">15:15:00.000</text><text x="186.8" y="960">04/16/2026</text>
<text x="263.1" y="948">15:20:00.000</text><text x="263.1" y="960">04/16/2026</text>
<text x="339.5" y="948">15:25:00.000</text><text x="339.5" y="960">04/16/2026</text>
<text x="415.8" y="948">15:30:00.000</text><text x="415.8" y="960">04/16/2026</text>
<text x="492.2" y="948">15:35:00.000</text><text x="492.2" y="960">04/16/2026</text>
<text x="568.5" y="948">15:40:00.000</text><text x="568.5" y="960">04/16/2026</text>
<text x="644.8" y="948">15:45:00.000</text><text x="644.8" y="960">04/16/2026</text>
<text x="721.2" y="948">15:50:00.000</text><text x="721.2" y="960">04/16/2026</text>
<text x="797.5" y="948">15:55:00.000</text><text x="797.5" y="960">04/16/2026</text>
<text x="873.8" y="948">16:00:00.000</text><text x="873.8" y="960">04/16/2026</text>
<text x="950.2" y="948">16:05:00.000</text><text x="950.2" y="960">04/16/2026</text>
<text x="1026.5" y="948">16:10:00.000</text><text x="1026.5" y="960">04/16/2026</text>
<text x="1102.9" y="948">16:15:00.000</text><text x="1102.9" y="960">04/16/2026</text>
<text x="1179.2" y="948">16:20:00.000</text><text x="1179.2" y="960">04/16/2026</text>
<text x="1255.5" y="948">16:25:00.000</text><text x="1255.5" y="960">04/16/2026</text>
<text x="1331.9" y="948">16:30:00.000</text><text x="1331.9" y="960">04/16/2026</text>
<text x="1408.2" y="948">16:35:00.000</text><text x="1408.2" y="960">04/16/2026</text>
<text x="1484.5" y="948">16:40:00.000</text><text x="1484.5" y="960">04/16/2026</text>
<text x="1560.9" y="948">16:45:00.000</text><text x="1560.9" y="960">04/16/2026</text>
<text x="1637.2" y="948">16:50:00.000</text><text x="1637.2" y="960">04/16/2026</text>
<text x="1713.6" y="948">16:55:00.000</text><text x="1713.6" y="960">04/16/2026</text>
<text x="1803.0" y="948">17:00:51.529</text><text x="1803.0" y="960">04/16/2026</text>
<text x="925" y="974">Time</text>
</g>
<g fill="#fff" font-family="Liberation Sans, sans-serif" font-size="10.5" font-weight="bold" text-anchor="middle">
<text x="901" y="15.5" xml:space="preserve">AOS  Thu 16 Apr 2026 17:00:38  AOS</text>
</g>
<g fill="#fff" font-family="Liberation Sans, sans-serif" font-size="10.5" font-weight="bold">
<text x="718" y="27.5">CoordSystem:121f05</text>
<text x="832" y="27.5">SensorID:121f05</text>
<text x="926" y="27.5">Axis:sum</text>
<text x="986" y="27.5">Windowing:Hanning</text>
<text x="619" y="39.5">Cuttoff(Hz):200</text>
<text x="715" y="39.5">df(Hz):0.2441</text>
<text x="799.5" y="39.5">Sample/Sec:500</text>
<text x="900.5" y="39.5">PSD size:2048</text>
<text x="994" y="39.5">Overlap(%):0</text>
<text x="1082" y="39.5">TimeRes.(sec):4.096</text>
</g>
<defs><linearGradient id="cb" x1="0" y1="0" x2="0" y2="1"><stop offset="0.0000" stop-color="#dc0a64"/><stop offset="0.1249" stop-color="#e82020"/><stop offset="0.2229" stop-color="#e85a28"/><stop offset="0.3512" stop-color="#f8a010"/><stop offset="0.3991" stop-color="#f8c808"/><stop offset="0.4131" stop-color="#f0e818"/><stop offset="0.4702" stop-color="#d0d828"/><stop offset="0.5181" stop-color="#a8c830"/><stop offset="0.5729" stop-color="#88c030"/><stop offset="0.6324" stop-color="#48a838"/><stop offset="0.6604" stop-color="#3c9048"/><stop offset="0.7036" stop-color="#289868"/><stop offset="0.7631" stop-color="#18a8a0"/><stop offset="0.8063" stop-color="#10b0c8"/><stop offset="0.8390" stop-color="#1080b8"/><stop offset="0.8821" stop-color="#1868a8"/><stop offset="0.9487" stop-color="#204c90"/><stop offset="1.0000" stop-color="#203a80"/></linearGradient></defs>
<rect x="1841" y="74" width="18" height="3" fill="#e85090"/>
<rect x="1841" y="79" width="18" height="857" fill="url(#cb)"/>
<rect x="1841" y="937" width="18" height="3" fill="#fff"/>
<g fill="#fff" font-family="Liberation Sans, sans-serif" font-size="10.5">
<text x="1868.5" y="83">-5.00</text>
<text x="1868.5" y="510.5">-9.00</text>
<text x="1868.5" y="939">-13.00</text>
<text transform="translate(1909,506) rotate(90)" text-anchor="middle">Amplitude(Log10(g^2/Hz))</text>
</g>
</svg>
</body></html>
